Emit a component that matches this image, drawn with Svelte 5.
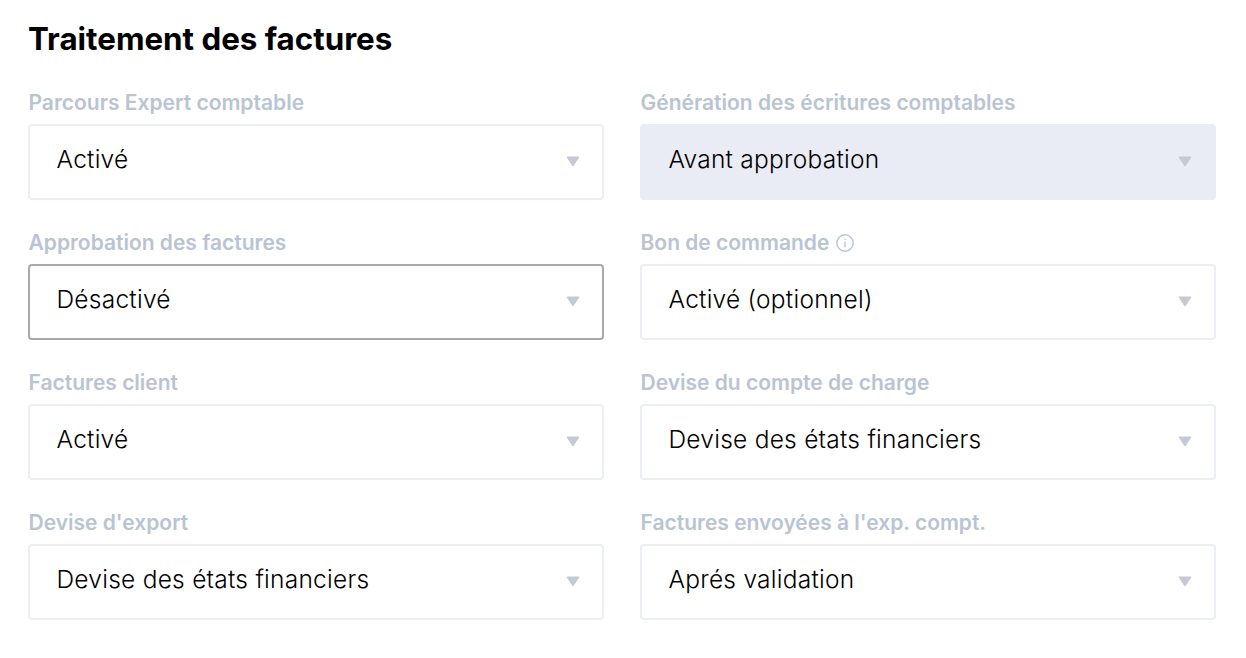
<script>
	const fields = [
		{ label: 'Parcours Expert comptable', value: 'Activé' },
		{ label: 'Génération des écritures comptables', value: 'Avant approbation', state: 'disabled' },
		{ label: 'Approbation des factures', value: 'Désactivé', state: 'hover' },
		{ label: 'Bon de commande', value: 'Activé (optionnel)', info: true },
		{ label: 'Factures client', value: 'Activé' },
		{ label: 'Devise du compte de charge', value: 'Devise des états financiers' },
		{ label: "Devise d'export", value: 'Devise des états financiers' },
		{ label: "Factures envoyées à l'exp. compt.", value: 'Aprés validation' }
	];
</script>

<section class="panel">
	<h2>Traitement des factures</h2>
	<div class="grid">
		{#each fields as field}
			<div class="field">
				<div class="label">
					<span>{field.label}</span>
					{#if field.info}
						<svg width="18" height="18" viewBox="0 0 18 18" fill="none" stroke="currentColor" stroke-width="1.4" stroke-linecap="round">
							<circle cx="9" cy="9" r="8.2"></circle>
							<line x1="9" y1="8.2" x2="9" y2="12.8"></line>
							<line x1="9" y1="5.2" x2="9" y2="5.4"></line>
						</svg>
					{/if}
				</div>
				<div class="select {field.state || ''}">
					<span>{field.value}</span>
					<svg class="arrow" width="14" height="11" viewBox="0 0 14 11">
						<path d="M1 1 H13 L7 10 Z" fill="#c5c9d3" stroke="#c5c9d3" stroke-linejoin="round"></path>
					</svg>
				</div>
			</div>
		{/each}
	</div>
</section>

<style>
	:global(body) {
		background: #fff;
		font-family: Inter, 'Liberation Sans', sans-serif;
	}

	.panel {
		padding: 20px 30px 0 28px;
	}

	h2 {
		margin: 0 0 33px;
		font-size: 31.3px;
		line-height: 38px;
		font-weight: 700;
		color: #000;
	}

	.grid {
		display: grid;
		grid-template-columns: 576px 576px;
		column-gap: 36px;
		row-gap: 31px;
	}

	.label {
		display: flex;
		align-items: center;
		gap: 7px;
		height: 23px;
		margin-bottom: 10px;
		padding-left: 0.5px;
		font-size: 21px;
		font-weight: 600;
		color: #b9c4d2;
	}

	.select {
		box-sizing: border-box;
		display: flex;
		align-items: center;
		justify-content: space-between;
		height: 76px;
		padding: 0 22px 7px 26.5px;
		background: #fff;
		border: 2px solid #ebeef5;
		border-radius: 4px;
		font-size: 24.5px;
		font-weight: 300;
		letter-spacing: 0.25px;
		color: #000;
	}

	.select.disabled {
		background: #e9ecf5;
		border-color: #e9ecf5;
	}

	.select.hover {
		border-color: #a9a9a9;
	}

	.arrow {
		margin-top: 6px;
	}
</style>
